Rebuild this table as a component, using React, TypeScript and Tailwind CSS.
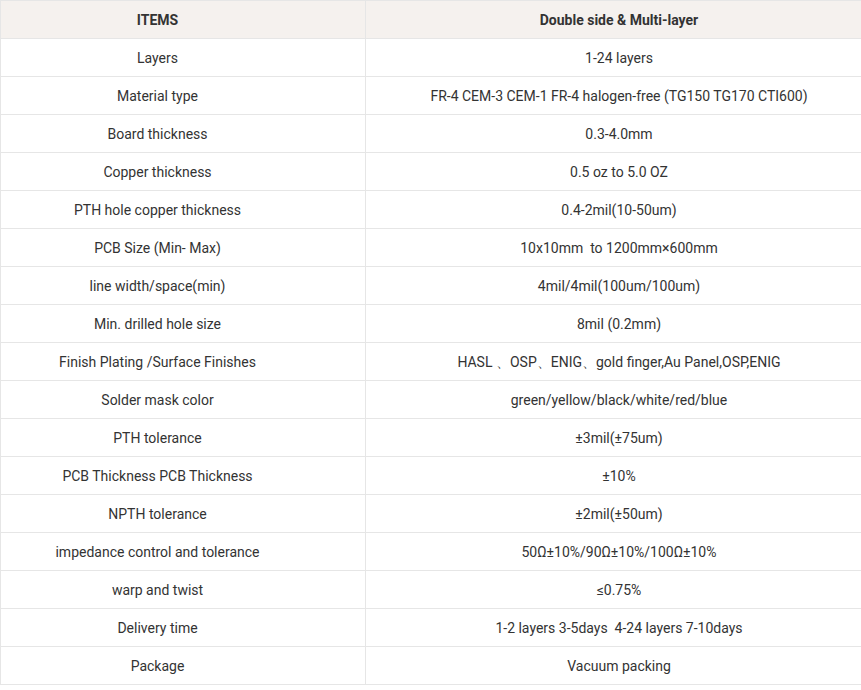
import React from 'react';

const rows: [string, string][] = [
  ['Layers', '1-24 layers'],
  ['Material type', 'FR-4 CEM-3 CEM-1 FR-4 halogen-free (TG150 TG170 CTI600)'],
  ['Board thickness', '0.3-4.0mm'],
  ['Copper thickness', '0.5 oz to 5.0 OZ'],
  ['PTH hole copper thickness', '0.4-2mil(10-50um)'],
  ['PCB Size (Min- Max)', '10x10mm\u00a0 to 1200mm×600mm'],
  ['line width/space(min)', '4mil/4mil(100um/100um)'],
  ['Min. drilled hole size', '8mil (0.2mm)'],
  ['Finish Plating /Surface Finishes', 'HASL 、OSP、ENIG、gold finger,Au Panel,OSP,ENIG'],
  ['Solder mask color', 'green/yellow/black/white/red/blue'],
  ['PTH tolerance', '±3mil(±75um)'],
  ['PCB Thickness PCB Thickness', '±10%'],
  ['NPTH tolerance', '±2mil(±50um)'],
  ['impedance control and tolerance', '50Ω±10%/90Ω±10%/100Ω±10%'],
  ['warp and twist', '≤0.75%'],
  ['Delivery time', '1-2 layers 3-5days\u00a0 4-24 layers 7-10days'],
  ['Package', 'Vacuum packing'],
];

export default function App() {
  return (
    <div className="w-[861px] overflow-hidden bg-white font-['Roboto',sans-serif] text-[14px] text-[#333]">
      <table className="w-[873px] border-collapse table-fixed">
        <colgroup>
          <col className="w-[365px]" />
          <col />
        </colgroup>
        <thead>
          <tr className="bg-[#f5f1ee] h-[38px]">
            <th className="border border-[#e6e6e6] pr-[51px] pt-[1px] font-bold text-center">ITEMS</th>
            <th className="border border-[#e6e6e6] pt-[1px] font-bold text-center">Double side &amp; Multi-layer</th>
          </tr>
        </thead>
        <tbody>
          {rows.map(([item, value]) => (
            <tr key={item} className="h-[38px]">
              <td className="border border-[#e6e6e6] pr-[51px] pt-[2px] text-center">{item}</td>
              <td className="border border-[#e6e6e6] pt-[2px] text-center">{value}</td>
            </tr>
          ))}
        </tbody>
      </table>
    </div>
  );
}
